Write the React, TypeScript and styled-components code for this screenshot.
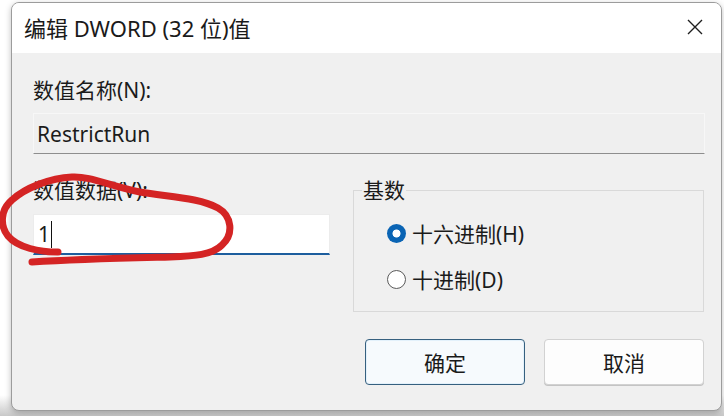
import React from "react";
import styled, { createGlobalStyle } from "styled-components";

const GlobalStyle = createGlobalStyle`
  html, body { margin: 0; padding: 0; background: #ffffff; }
  body {
    font-family: "Noto Sans", "Noto Sans CJK SC", sans-serif;
    color: #1b1b1b;
  }
  * { box-sizing: border-box; }
`;

const Page = styled.div`
  position: relative;
  width: 724px;
  height: 416px;
  padding: 2px 2px 0 11px;
  overflow: hidden;
  background: linear-gradient(#ffffff 0 95%, #c8c8c8 100%);
`;

const Dialog = styled.div`
  width: 711px;
  height: 409px;
  border: 1px solid #9c9c9c;
  border-radius: 8px;
  overflow: hidden;
  display: flex;
  flex-direction: column;
  background: #f0f0f0;
  box-shadow: 0 2px 6px rgba(0, 0, 0, 0.25);
`;

const TitleBar = styled.div`
  height: 50px;
  flex: none;
  background: #ffffff;
  display: flex;
  align-items: center;
  justify-content: space-between;
  padding: 0 18px 0 12px;
`;

const Title = styled.div`
  font-size: 22px;
  line-height: 26px;
  color: #1a1a1a;
`;

const CloseButton = styled.div`
  width: 16px;
  height: 16px;
  display: flex;
  align-items: center;
  justify-content: center;
  margin-bottom: 2px;
`;

const Body = styled.div`
  flex: 1;
  display: flex;
  flex-direction: column;
  padding: 25px 16px 0 21px;
`;

const Label = styled.div`
  font-size: 21px;
  line-height: 24px;
`;

const NameField = styled.div`
  margin-top: 11px;
  height: 41px;
  background: #efefef;
  border: 1px solid #f7f7f7;
  border-bottom: 1px solid #8e8e8e;
  display: flex;
  align-items: center;
  padding-left: 3px;
  font-size: 21px;
`;

const Lower = styled.div`
  margin-top: 24px;
  display: grid;
  grid-template-columns: 297px 351px;
  column-gap: 23px;
  align-items: start;
`;

const LeftCol = styled.div`
  display: flex;
  flex-direction: column;
`;

const ValueInput = styled.div`
  margin-top: 12px;
  height: 41px;
  background: #ffffff;
  border: 1px solid #ececec;
  border-bottom: 2px solid #1d5e9e;
  display: flex;
  align-items: center;
  padding-left: 4px;
  font-size: 21px;
`;

const Caret = styled.span`
  display: inline-block;
  width: 1px;
  height: 27px;
  background: #111;
  margin-left: 1px;
`;

const GroupBox = styled.fieldset`
  margin: 0;
  padding: 0 0 17px 33px;
  border: 1px solid #d9d9d9;
  min-width: 0;
  display: flex;
  flex-direction: column;
  gap: 16px;
`;

const Legend = styled.legend`
  font-size: 21px;
  line-height: 24px;
  padding: 0 1px;
  margin-left: -25px;
  margin-bottom: 16px;
`;

const RadioRow = styled.div`
  height: 30px;
  display: flex;
  align-items: center;
  gap: 6px;
  font-size: 21px;
`;

const RadioCircle = styled.span<{ $checked?: boolean }>`
  width: 19px;
  height: 19px;
  border-radius: 50%;
  flex: none;
  ${(p) =>
    p.$checked
      ? `background: radial-gradient(circle, #ffffff 0 3.6px, #0a64b4 4.4px);`
      : `background: #ffffff; border: 1px solid #5a5a5a;`}
`;

const ButtonRow = styled.div`
  margin-top: 27px;
  display: flex;
  justify-content: flex-end;
  gap: 19px;
  padding-right: 1px;
`;

const Button = styled.div<{ $primary?: boolean }>`
  width: 160px;
  height: 46px;
  border-radius: 4px;
  display: flex;
  align-items: center;
  justify-content: center;
  font-size: 21px;
  color: #1a1a1a;
  background: ${(p) => (p.$primary ? "#f6fafd" : "#fdfdfd")};
  border: 1px solid ${(p) => (p.$primary ? "#36607f" : "#d2d2d2")};
  box-shadow: ${(p) =>
    p.$primary ? "inset 0 0 0 1px #e3f1fb" : "0 1px 0 #c4c4c4"};
`;

const Annotation = styled.svg`
  position: absolute;
  left: 0;
  top: 170px;
  width: 240px;
  height: 100px;
  pointer-events: none;
`;

export default function App() {
  return (
    <>
      <GlobalStyle />
      <Page>
        <Dialog>
          <TitleBar>
            <Title>编辑 DWORD (32 位)值</Title>
            <CloseButton>
              <svg width="16" height="16" viewBox="0 0 16 16">
                <path
                  d="M1 1 L15 15 M15 1 L1 15"
                  stroke="#1f1f1f"
                  strokeWidth="1.4"
                  fill="none"
                />
              </svg>
            </CloseButton>
          </TitleBar>
          <Body>
            <Label>数值名称(N):</Label>
            <NameField>RestrictRun</NameField>
            <Lower>
              <LeftCol>
                <Label>数值数据(V):</Label>
                <ValueInput>
                  1<Caret />
                </ValueInput>
              </LeftCol>
              <GroupBox>
                <Legend>基数</Legend>
                <RadioRow>
                  <RadioCircle $checked />
                  十六进制(H)
                </RadioRow>
                <RadioRow>
                  <RadioCircle />
                  十进制(D)
                </RadioRow>
              </GroupBox>
            </Lower>
            <ButtonRow>
              <Button $primary>确定</Button>
              <Button>取消</Button>
            </ButtonRow>
          </Body>
        </Dialog>
        <Annotation viewBox="0 0 240 100">
          <path
            d="M58 82 C40 82, 18 78, 8 66 C0 56, 0 40, 12 30 C25 18, 50 8, 72 7 C90 6, 110 16, 140 22 C170 27, 200 28, 218 38 C232 46, 234 64, 222 75 C212 85, 195 86, 170 87 C130 88, 80 89, 32 92"
            stroke="#d42424"
            strokeWidth="7"
            strokeLinecap="round"
            strokeLinejoin="round"
            fill="none"
          />
        </Annotation>
      </Page>
    </>
  );
}
